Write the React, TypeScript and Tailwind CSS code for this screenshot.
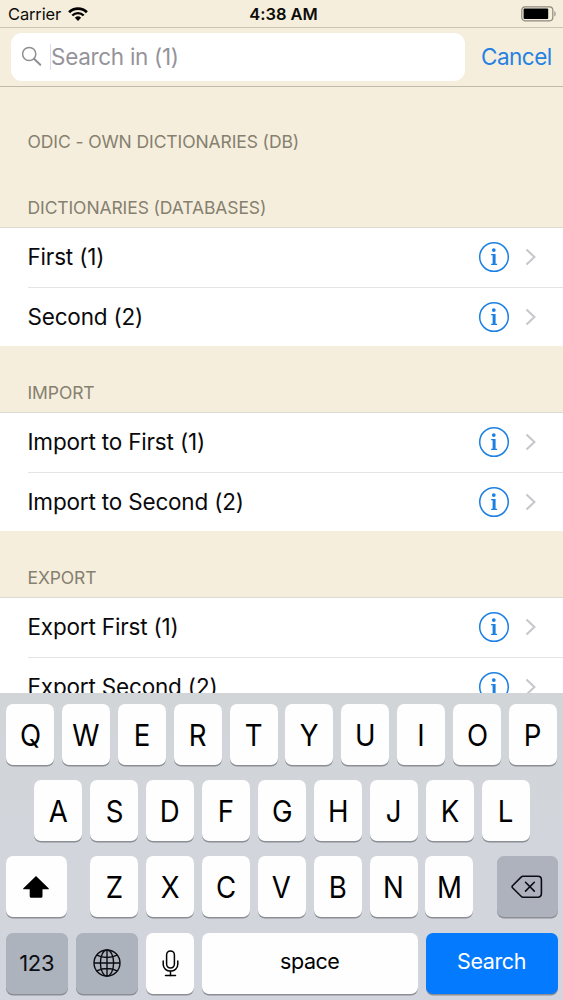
import type { ReactNode } from "react";

function WifiIcon() {
  return (
    <svg width="20" height="14" viewBox="0 0 20 14" className="block">
      <path d="M1.1 5.300a12.600 12.600 0 0 1 17.800 0" fill="none" stroke="#000" strokeWidth="2.700" />
      <path d="M4.300 8.500a8.100 8.100 0 0 1 11.400 0" fill="none" stroke="#000" strokeWidth="2.400" />
      <path d="M6.900 10.800a4.500 4.500 0 0 1 6.200 0L10 13.900z" fill="#000" />
    </svg>
  );
}

function BatteryIcon() {
  return (
    <svg width="36" height="16" viewBox="0 0 36 16" className="block">
      <rect x="0.8" y="0.8" width="31" height="14" rx="3.2" fill="none" stroke="#8d897c" strokeWidth="1.2" />
      <rect x="2.6" y="2.6" width="24.6" height="10.4" rx="1" fill="#000" />
      <path d="M33.4 5.2c1.6.5 1.6 4.6 0 5.2z" fill="#8d897c" />
    </svg>
  );
}

function SearchIcon() {
  return (
    <svg width="22" height="22" viewBox="0 0 22 22" className="block">
      <circle cx="8.2" cy="8" r="6.6" fill="none" stroke="#8e8e93" strokeWidth="1.5" />
      <path d="M13 12.8l6.300 6" stroke="#8e8e93" strokeWidth="2" strokeLinecap="round" />
    </svg>
  );
}

function InfoIcon() {
  return (
    <svg width="32" height="32" viewBox="0 0 32 32" className="block">
      <circle cx="16" cy="16" r="14.3" fill="none" stroke="#1c80e3" strokeWidth="1.5" />
      <circle cx="15.8" cy="9.1" r="1.9" fill="#1c80e3" />
      <path d="M13.1 13.100h4.500v9.600h1.500v1.200h-6v-1.200h1.500v-8.400h-1.500z" fill="#1c80e3" />
    </svg>
  );
}

function Chevron() {
  return (
    <svg width="12" height="18" viewBox="0 0 12 18" className="block">
      <path d="M1.5 1.400L9.400 9l-7.900 7.600" fill="none" stroke="#c7c7cc" strokeWidth="2.100" />
    </svg>
  );
}

function ShiftIcon() {
  return (
    <svg width="28" height="24" viewBox="0 0 28 24" className="block">
      <path d="M14 1L26.6 13.2c.5.6.3 1.1-.4 1.1h-5.7v7q0 1.5-1.5 1.5h-9.8q-1.5 0-1.5-1.5v-7H1.8c-.7 0-.9-.5-.4-1.1z" fill="#000" />
    </svg>
  );
}

function BackspaceIcon() {
  return (
    <svg width="32" height="24" viewBox="0 0 32 24" className="block" fill="none" stroke="#0b0d12" strokeWidth="1.600" strokeLinejoin="round" strokeLinecap="round">
      <path d="M12 1.200h14.800q3.600 0 3.600 3.600v13.800q0 3.600-3.600 3.600H12q-1.100 0-1.900-.9L1.500 12.700q-.8-1 0-2L10.100 2.100q.8-.9 1.900-.9z" />
      <path d="M14.500 7.300l8.800 8.800M23.300 7.300l-8.800 8.800" />
    </svg>
  );
}

function GlobeIcon() {
  return (
    <svg width="28" height="28" viewBox="0 0 28 28" className="block" fill="none" stroke="#0b0d12" strokeWidth="1.400">
      <circle cx="14" cy="14" r="13" />
      <ellipse cx="14" cy="14" rx="6.600" ry="13" />
      <path d="M14 1v26M1 14h26M3.800 6.200q10.200 4.700 20.400 0M3.800 21.800q10.200-4.700 20.400 0" />
    </svg>
  );
}

function MicIcon() {
  return (
    <svg width="17" height="27" viewBox="0 0 17 27" className="block" fill="none" stroke="#000" strokeWidth="1.500">
      <rect x="4.600" y="1" width="7.800" height="17" rx="3.900" />
      <path d="M1.200 11v3.200c0 9.200 14.600 9.200 14.600 0V11M8.500 21.200v4.500M3.500 25.600h10" strokeLinecap="round" />
    </svg>
  );
}

function SectionHeader({ children }: { children: ReactNode }) {
  return (
    <h2 className="flex h-[66px] shrink-0 items-end pb-[9px] pl-[27.500px] text-[17.500px] leading-[20px] tracking-[-0.100px] text-[#85806f]">
      {children}
    </h2>
  );
}

function Row({ label, last = false }: { label: string; last?: boolean }) {
  return (
    <li className="flex h-[59.500px] shrink-0 pl-[27.500px]">
      <div className={`flex flex-1 items-center pr-[26px] ${last ? "" : "border-b border-[#e4e4e6]"}`}>
        <span className="flex-1 text-[22.500px] leading-[28px] tracking-[-0.180px] text-[#0a0a0c]">{label}</span>
        <InfoIcon />
        <span className="ml-[15px]">
          <Chevron />
        </span>
      </div>
    </li>
  );
}

function List({ rows }: { rows: string[] }) {
  return (
    <ul className="flex h-[119px] shrink-0 flex-col border-t border-[#dddacf] bg-white">
      {rows.map((r, i) => (
        <Row key={r} label={r} last={i === rows.length - 1} />
      ))}
    </ul>
  );
}

const keyBase = "flex h-[61px] shrink-0 items-center justify-center rounded-[7px] shadow-[0_1.5px_0_#8b8e94]";

function Letter({ children }: { children: string }) {
  return (
    <button className={`${keyBase} w-[48px] bg-[#fefefe] text-[30px] leading-none text-black`}>
      <span className="scale-x-[0.92]">{children}</span>
    </button>
  );
}

function Letters({ keys }: { keys: string }) {
  return (
    <div className="flex gap-[7.900px]">
      {keys.split("").map((k) => (
        <Letter key={k}>{k}</Letter>
      ))}
    </div>
  );
}

function Keyboard() {
  return (
    <div className="flex h-[307px] shrink-0 flex-col gap-[15.200px] bg-linear-to-b from-[#d1d5d8] to-[#d3d5de] pt-[11px]">
      <div className="flex justify-center">
        <Letters keys="QWERTYUIOP" />
      </div>
      <div className="flex justify-center pl-px">
        <Letters keys="ASDFGHJKL" />
      </div>
      <div className="flex justify-between px-[5.500px]">
        <button className={`${keyBase} w-[61.500px] bg-[#fefefe]`}>
          <ShiftIcon />
        </button>
        <Letters keys="ZXCVBNM" />
        <button className={`${keyBase} w-[61px] bg-[#adb2bd]`}>
          <BackspaceIcon />
        </button>
      </div>
      <div className="flex justify-between px-[5.500px]">
        <button className={`${keyBase} w-[62.500px] bg-[#adb3bc] text-[22px] tracking-[-0.300px] text-[#0b0d12]`}>123</button>
        <button className={`${keyBase} w-[62px] bg-[#adb3bc]`}>
          <GlobeIcon />
        </button>
        <button className={`${keyBase} w-[48px] bg-[#fefefe]`}>
          <MicIcon />
        </button>
        <button className={`${keyBase} w-[215.500px] bg-[#fefefe] pb-[3px] text-[21.500px] tracking-[-0.450px] text-black`}>space</button>
        <button className={`${keyBase} w-[132px] bg-[#047aff] pb-[3px] text-[21.500px] tracking-[-0.400px] text-white`}>Search</button>
      </div>
    </div>
  );
}

export default function App() {
  return (
    <div className="flex h-[1000px] w-[563px] flex-col overflow-hidden bg-[#f5eedd] font-['Inter',sans-serif]">
      <header className="grid h-[28px] shrink-0 grid-cols-3 items-center border-b border-[#c9c5b3] pl-[8px] pr-[6px] text-[16.500px] leading-[20px] text-[#0d0c08]">
        <div className="flex items-center gap-[7px]">
          <span className="w-[53px] tracking-[-0.150px]">Carrier</span>
          <WifiIcon />
        </div>
        <span className="pl-[2px] text-center text-[16.500px] font-semibold tracking-[-0.050px]">4:38 AM</span>
        <div className="flex justify-end">
          <BatteryIcon />
        </div>
      </header>
      <div className="flex h-[59px] shrink-0 items-center border-b border-[#bfbba9] pl-[11px]">
        <div className="flex h-[48px] w-[454px] items-center rounded-[11px] bg-white pl-[10px]">
          <SearchIcon />
          <span className="ml-[7px] h-[26px] w-px bg-[#dcdaf0]" />
          <span className="text-[22.500px] leading-[28px] tracking-[-0.300px] text-[#95939a]">Search in (1)</span>
        </div>
        <button className="ml-[16px] text-[22.500px] leading-[28px] tracking-[-0.500px] text-[#2581e2]">Cancel</button>
      </div>
      <main className="flex h-[606px] shrink-0 flex-col overflow-hidden pt-[8px]">
        <SectionHeader>ODIC - OWN DICTIONARIES (DB)</SectionHeader>
        <SectionHeader>DICTIONARIES (DATABASES)</SectionHeader>
        <List rows={["First (1)", "Second (2)"]} />
        <SectionHeader>IMPORT</SectionHeader>
        <List rows={["Import to First (1)", "Import to Second (2)"]} />
        <SectionHeader>EXPORT</SectionHeader>
        <List rows={["Export First (1)", "Export Second (2)"]} />
      </main>
      <Keyboard />
    </div>
  );
}
